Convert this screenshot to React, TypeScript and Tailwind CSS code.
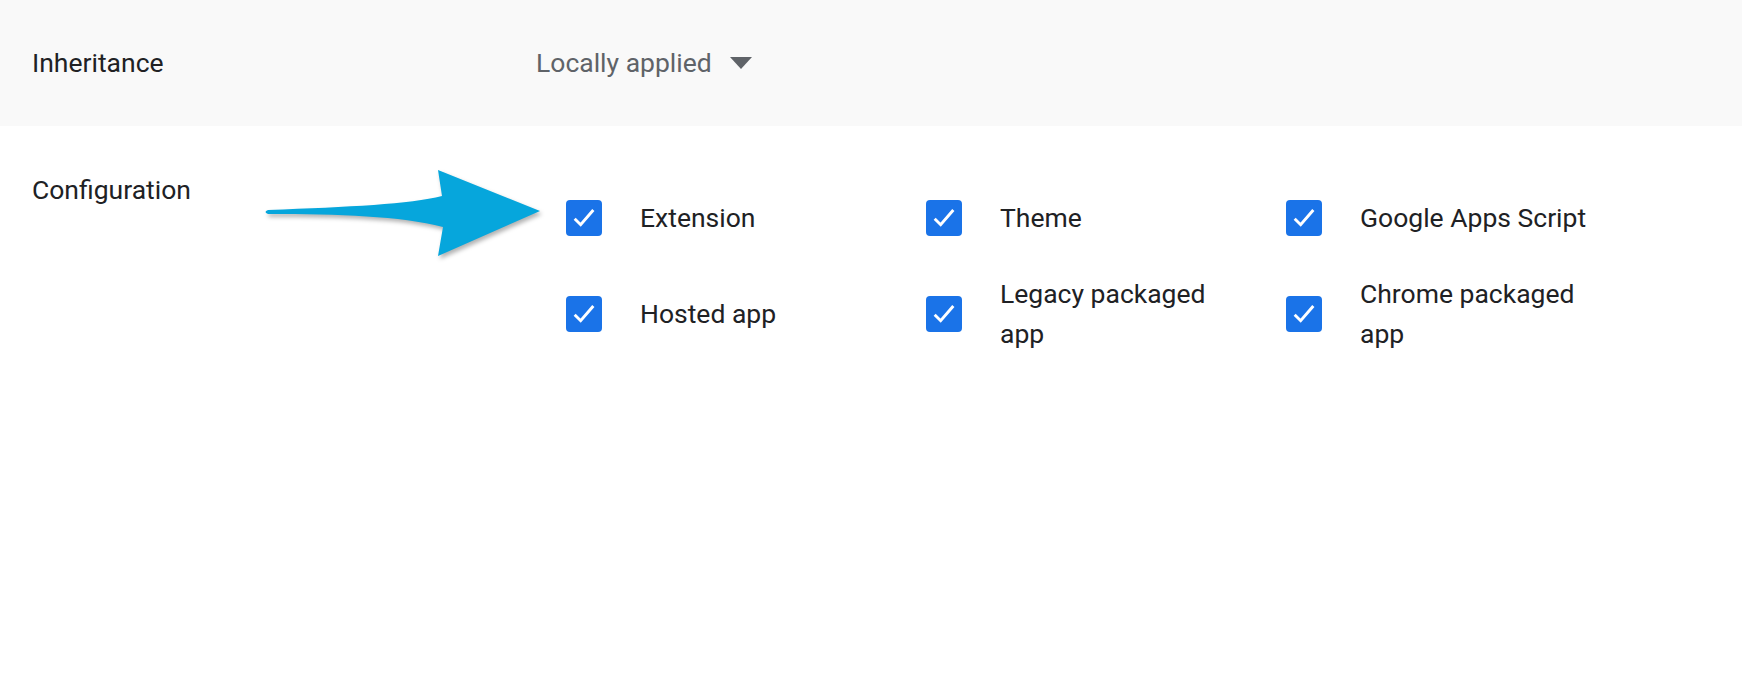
import React from 'react';

const items = [
  'Extension',
  'Theme',
  'Google Apps Script',
  'Hosted app',
  'Legacy packaged app',
  'Chrome packaged app',
];

const Check = () => (
  <div className="w-[36px] h-[36px] shrink-0 rounded-[4px] bg-[#1a73e8] flex items-center justify-center">
    <svg width="32" height="32" viewBox="0 0 24 24" fill="none">
      <path d="M5 12.5l4.5 4.5L19 6" stroke="white" strokeWidth="2.2" />
    </svg>
  </div>
);

const App = () => {
  return (
    <div className="w-[1742px] h-[676px] bg-white text-[26.5px] text-[#202124]" style={{ fontFamily: 'Roboto, sans-serif' }}>
      {/* Inheritance row */}
      <div className="h-[126px] bg-[#f9f9f9] flex items-center pl-[32px]">
        <div className="w-[504px]">Inheritance</div>
        <div className="flex items-center gap-[18px] text-[#5f6368]">
          <span>Locally applied</span>
          <svg width="22" height="12" viewBox="0 0 22 12">
            <path d="M0 0h22L11 12z" fill="#5f6368" />
          </svg>
        </div>
      </div>

      {/* Configuration row */}
      <div className="flex pl-[32px] pt-[44px]">
        <div className="w-[534px]">Configuration</div>
        <div className="relative grid grid-cols-[360px_360px_360px] gap-y-[16px] pt-[8px]">
          <svg className="absolute left-[-306px] top-[0px] drop-shadow-[2px_3px_2px_rgba(0,0,0,0.3)]" width="290" height="90" viewBox="0 0 290 90">
            <path d="M8 40 C90 37 150 34 182 26 L178 0 L280 41 L178 86 L183 57 C140 46 80 44 8 44 Q3 42 8 40z" fill="#06a6dc" />
          </svg>
          {items.map((label) => (
            <div key={label} className="flex items-center h-[80px]">
              <Check />
              <div className="ml-[38px] w-[240px] leading-[40px]">{label}</div>
            </div>
          ))}
        </div>
      </div>
    </div>
  );
};

export default App;
